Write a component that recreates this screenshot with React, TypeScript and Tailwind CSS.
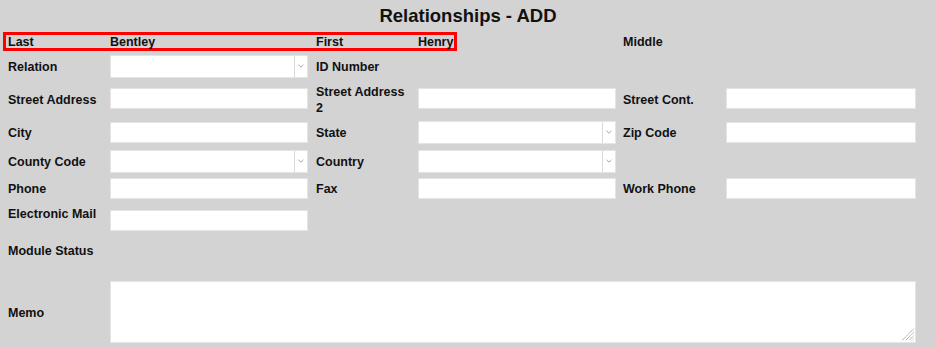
const cols = 'grid grid-cols-[102px_206px_102px_205px_103px_190px] items-center';
const label = 'w-[94px] leading-4 pt-[2px]';

function TextBox({ w = 'w-[198px]' }: { w?: string }) {
  return <div className={`${w} h-[21px] bg-white border border-[#e4e4e4]`} />;
}

function SelectBox() {
  return (
    <div className="w-[198px] h-[23px] bg-white border border-[#e4e4e4] flex">
      <div className="flex-1" />
      <div className="w-[13px] border-l border-[#dadada] flex items-center justify-center">
        <svg width="6" height="4" viewBox="0 0 6 4">
          <path d="M0.5 0.8 L3 3.2 L5.5 0.8" fill="none" stroke="#9a9a9a" strokeWidth="0.9" />
        </svg>
      </div>
    </div>
  );
}

export default function App() {
  return (
    <div
      className="w-[936px] h-[347px] bg-[#d3d3d3] text-[#111] font-bold text-[12.5px] overflow-hidden"
      style={{ fontFamily: '"Liberation Sans", Arial, sans-serif' }}
    >
      {/* Title */}
      <div className="h-[32px] flex items-center justify-center text-[18.5px]">
        Relationships - ADD
      </div>

      {/* Name row with highlight */}
      <div className="h-[19px] flex">
        <div className="ml-[3px] w-[454px] h-[19px] border-[3px] border-[#ff0000] pl-[2px] pt-[1px] grid grid-cols-[102px_206px_102px_40px] items-center leading-[13px]">
          <span>Last</span>
          <span>Bentley</span>
          <span>First</span>
          <span>Henry</span>
        </div>
        <div className="ml-[166px] pt-[2px] flex items-center leading-[13px]">Middle</div>
      </div>

      <div className="px-[8px]">
        <div className={`${cols} h-[30px]`}>
          <span className={label}>Relation</span>
          <SelectBox />
          <span className={label}>ID Number</span>
        </div>

        <div className={`${cols} h-[35px]`}>
          <span className={label}>Street Address</span>
          <TextBox />
          <span className={label}>Street Address 2</span>
          <TextBox />
          <span className={label}>Street Cont.</span>
          <TextBox w="w-[190px]" />
        </div>

        <div className={`${cols} h-[32px]`}>
          <span className={label}>City</span>
          <TextBox />
          <span className={label}>State</span>
          <SelectBox />
          <span className={label}>Zip Code</span>
          <TextBox w="w-[190px]" />
        </div>

        <div className={`${cols} h-[26px]`}>
          <span className={label}>County Code</span>
          <SelectBox />
          <span className={label}>Country</span>
          <SelectBox />
        </div>

        <div className={`${cols} h-[28px]`}>
          <span className={label}>Phone</span>
          <TextBox />
          <span className={label}>Fax</span>
          <TextBox />
          <span className={label}>Work Phone</span>
          <TextBox w="w-[190px]" />
        </div>

        <div className="grid grid-cols-[102px_206px] items-start h-[34px]">
          <span className={`${label} mt-[2px]`}>Electronic Mail</span>
          <div className="mt-[8px]">
            <TextBox />
          </div>
        </div>

        <div className="h-[28px] flex items-center">
          <span className={label}>Module Status</span>
        </div>

        <div className="pt-[17px] grid grid-cols-[102px_806px] items-center">
          <span className={label}>Memo</span>
          <div className="relative h-[62px] bg-white border border-[#e4e4e4]">
            <svg className="absolute right-[1px] bottom-[1px]" width="13" height="13" viewBox="0 0 13 13">
              <g stroke="#8a8a8a" strokeWidth="1" strokeDasharray="1 0.6">
                <line x1="12.5" y1="1" x2="1" y2="12.5" />
                <line x1="12.5" y1="4.5" x2="4.5" y2="12.5" />
                <line x1="12.5" y1="8" x2="8" y2="12.5" />
                <line x1="12.5" y1="11" x2="11" y2="12.5" />
              </g>
            </svg>
          </div>
        </div>
      </div>
    </div>
  );
}
